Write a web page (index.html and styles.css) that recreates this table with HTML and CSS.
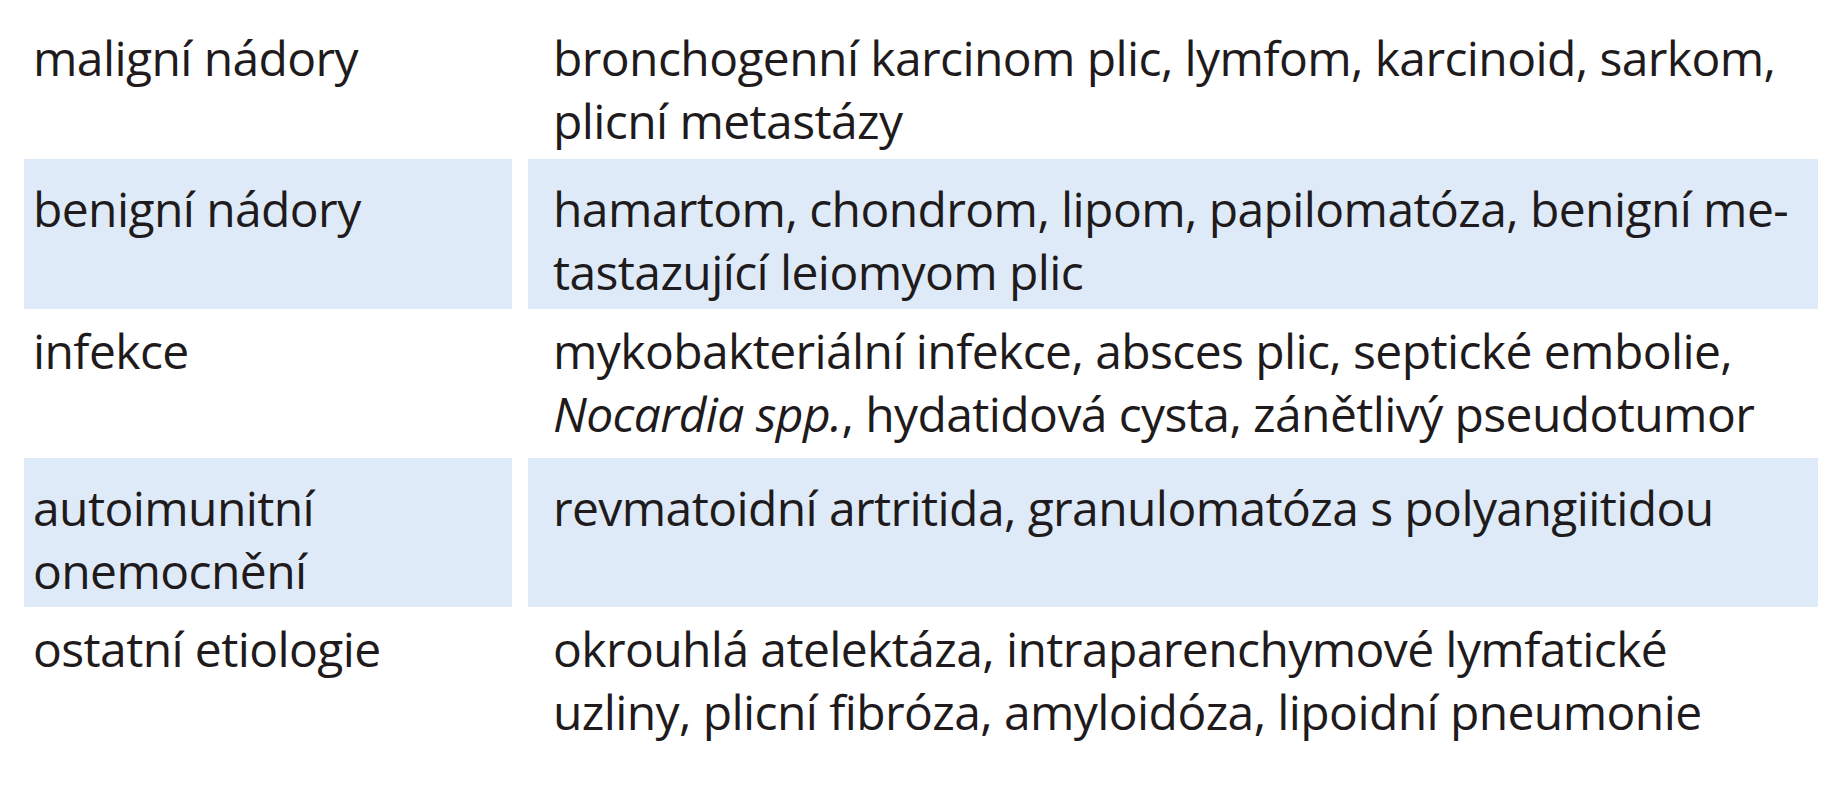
FILE: index.html
```html
<!DOCTYPE html>
<html lang="cs">
<head>
<meta charset="utf-8">
<title>Tabulka</title>
<link rel="stylesheet" href="styles.css">
</head>
<body>
<div class="table">
  <div class="cell term">maligní nádory</div>
  <div class="cell desc">bronchogenní karcinom plic, lymfom, karcinoid, sarkom,<br>plicní metastázy</div>

  <div class="cell term alt">benigní nádory</div>
  <div class="cell desc alt">hamartom, chondrom, lipom, papilomatóza, benigní me-<br>tastazující leiomyom plic</div>

  <div class="cell term">infekce</div>
  <div class="cell desc">mykobakteriální infekce, absces plic, septické embolie,<br><i>Nocardia spp.</i>, hydatidová cysta, zánětlivý pseudotumor</div>

  <div class="cell term alt">autoimunitní<br>onemocnění</div>
  <div class="cell desc alt">revmatoidní artritida, granulomatóza s polyangiitidou</div>

  <div class="cell term">ostatní etiologie</div>
  <div class="cell desc">okrouhlá atelektáza, intraparenchymové lymfatické<br>uzliny, plicní fibróza, amyloidóza, lipoidní pneumonie</div>
</div>
</body>
</html>
```
FILE: styles.css
```css
html, body {
  margin: 0;
  padding: 0;
  background: #ffffff;
}
body {
  font-family: "Open Sans", "Noto Sans", sans-serif;
  color: #1f1b1d;
  font-size: 48px;
  line-height: 63px;
  letter-spacing: -0.6px;
}
.table {
  display: grid;
  grid-template-columns: 488px 1290px;
  grid-template-rows: 143px 150px 149px 149px auto;
  column-gap: 16px;
  margin: 16px 0 0 24px;
}
.cell {
  padding-top: 10px;
  white-space: nowrap;
}
.term {
  padding-left: 9px;
}
.desc {
  padding-left: 25px;
}
.alt {
  background: #deeaf7;
  padding-top: 18px;
}
.desc i {
  font-style: italic;
}
```
